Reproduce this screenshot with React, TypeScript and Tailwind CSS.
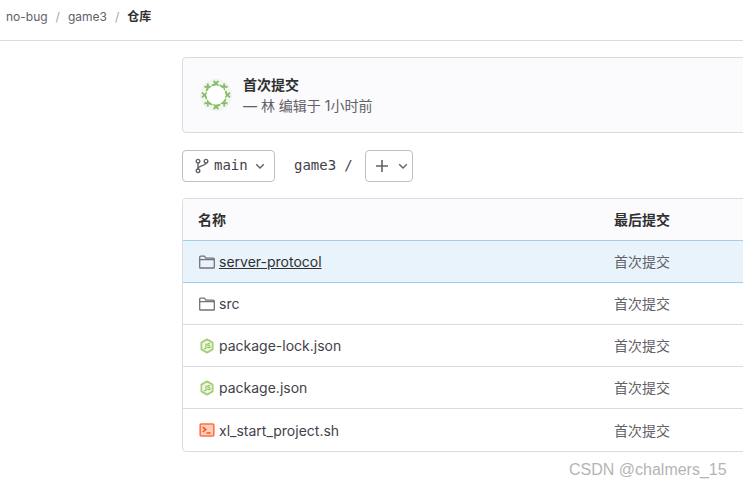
const sans = "font-['Inter','Noto_Sans_CJK_SC',sans-serif]";

const files = [
  { name: 'server-protocol', type: 'folder', active: true },
  { name: 'src', type: 'folder' },
  { name: 'package-lock.json', type: 'node' },
  { name: 'package.json', type: 'node' },
  { name: 'xl_start_project.sh', type: 'shell' },
];

function FolderIcon() {
  return (
    <svg width="16" height="16" viewBox="0 0 16 16" fill="none" stroke="#737278" strokeWidth="1.3">
      <path d="M0.7 13.4V3.2a1 1 0 0 1 1-1h3.6l1.6 2h7.4a1 1 0 0 1 1 1v8.2a.6.6 0 0 1-.6.6H1.3a.6.6 0 0 1-.6-.6z" />
      <path d="M0.7 5.6h14.6" />
    </svg>
  );
}

function NodeIcon() {
  return (
    <svg width="16" height="16" viewBox="0 0 16 16" fill="none">
      <path d="M8 1.4l5.6 3.2v6.8L8 14.6l-5.6-3.2V4.6z" fill="#f1f8e9" stroke="#a5d078" strokeWidth="1.8" strokeLinejoin="round" />
      <path d="M7 5.4v4.6c0 1-1.5 1-1.9.2" stroke="#8bc34a" strokeWidth="1.1" />
      <path d="M11 6.2c-.5-.9-2.4-.9-2.4.3 0 1.3 2.6.7 2.6 2.2 0 1.2-2.2 1.2-2.9.2" stroke="#8bc34a" strokeWidth="1.1" />
    </svg>
  );
}

function ShellIcon() {
  return (
    <svg width="16" height="16" viewBox="0 0 16 16" fill="none">
      <rect x="1.2" y="2" width="13.6" height="12" rx="1" fill="#ffccbc" stroke="#ff7043" strokeWidth="1.6" />
      <path d="M3.8 5.2L6.8 7.6 3.8 10" stroke="#f4511e" strokeWidth="1.5" />
      <path d="M7.6 11h4" stroke="#f4511e" strokeWidth="1.5" />
    </svg>
  );
}

function Avatar() {
  const leaves = Array.from({ length: 8 }, (_, i) => i * 45);
  return (
    <svg width="32" height="32" viewBox="0 0 32 32" className="rounded-full">
      <circle cx="16" cy="16" r="16" fill="#f0f0f0" />
      <circle cx="16" cy="16" r="15" fill="#f3f7f0" />
      {leaves.map((deg) => (
        <g key={deg} transform={`rotate(${deg} 16 16)`}>
          <path d="M13.6 2l4.8 5M18.4 2l-4.8 5" stroke="#86bd68" strokeWidth="1.9" />
          <path d="M19.6 6.6c1.8 .1 2.8 .8 3.6 1.9" stroke="#86bd68" strokeWidth="2" fill="none" />
        </g>
      ))}
      <circle cx="16" cy="16" r="9.6" fill="#ffffff" />
    </svg>
  );
}

function Chevron() {
  return (
    <svg width="10" height="10" viewBox="0 0 10 10" fill="none" stroke="#626168" strokeWidth="1.4">
      <path d="M1.2 3.2L5 7l3.8-3.8" />
    </svg>
  );
}

function BranchIcon() {
  return (
    <svg width="14" height="16" viewBox="0 0 14 16" fill="none" stroke="#626168" strokeWidth="1.4">
      <circle cx="3" cy="3.2" r="1.8" />
      <circle cx="3" cy="12.8" r="1.8" />
      <circle cx="11" cy="3.2" r="1.8" />
      <path d="M3 5v6" />
      <path d="M11 5c0 3-8 2.4-8 6" />
    </svg>
  );
}

export default function App() {
  return (
    <div className={`${sans} relative h-[487px] w-[743px] overflow-hidden bg-white text-[#303030]`}>
      <div className="flex h-[41px] items-center border-b border-[#dcdcde] pl-[6px] pb-[6px] text-[12px] text-[#626168]">
        <span>no-bug</span>
        <span className="mx-[8px] text-[#a4a3a8]">/</span>
        <span>game3</span>
        <span className="mx-[8px] text-[#a4a3a8]">/</span>
        <span className="font-semibold text-[#303030]">仓库</span>
      </div>

      <div className="ml-[182px] w-[640px] pt-[16px]">
        <div className="flex h-[76px] items-center rounded-l-[4px] border border-[#dcdcde] bg-[#fbfafd] pl-[17px]">
          <Avatar />
          <div className="ml-[11px]">
            <div className="text-[14px] leading-[20px] font-semibold">首次提交</div>
            <div className="mt-[1px] text-[14px] leading-[20px] text-[#626168]">— 林 编辑于 1小时前</div>
          </div>
        </div>

        <div className="mt-[17px] flex h-[32px] items-center">
          <div className="flex h-[32px] w-[93px] items-center rounded-[4px] border border-[#bfbfc3] pl-[12px]">
            <BranchIcon />
            <span className="ml-[5px] pb-[2px] font-['DejaVu_Sans_Mono',monospace] text-[14px] text-[#434248]">main</span>
            <span className="ml-[7px]"><Chevron /></span>
          </div>
          <span className="ml-[19px] pb-[2px] font-['DejaVu_Sans_Mono',monospace] text-[14px] text-[#434248]">game3</span>
          <span className="ml-[8px] pb-[2px] font-['DejaVu_Sans_Mono',monospace] text-[14px] text-[#434248]">/</span>
          <div className="ml-[12px] flex h-[32px] w-[48px] items-center rounded-[4px] border border-[#bfbfc3] pl-[9px]">
            <svg width="14" height="14" viewBox="0 0 14 14" stroke="#626168" strokeWidth="1.6">
              <path d="M7 1v12M1 7h12" />
            </svg>
            <span className="ml-[9px]"><Chevron /></span>
          </div>
        </div>

        <div className="mt-[16px] overflow-hidden rounded-[4px] border border-[#dcdcde]">
          <div className="flex h-[41px] items-center bg-[#fbfafd] pl-[15px] text-[14px] font-semibold">
            <div className="w-[416px]">名称</div>
            <div>最后提交</div>
          </div>
          {files.map((file) => (
            <div
              key={file.name}
              className={
                file.active
                  ? 'flex h-[43px] items-center border-y border-[#a3cdec] bg-[#e9f3fc] pl-[16px] text-[14px]'
                  : 'flex h-[42px] items-center border-b border-[#dcdcde] pl-[16px] text-[14px] text-[#434248] last:border-b-0'
              }
            >
              <div className="flex w-[415px] items-center gap-[4px]">
                {file.type === 'folder' && <FolderIcon />}
                {file.type === 'node' && <NodeIcon />}
                {file.type === 'shell' && <ShellIcon />}
                <span className={file.active ? 'underline' : ''}>{file.name}</span>
              </div>
              <div className="text-[14px] text-[#626168]">首次提交</div>
            </div>
          ))}
        </div>
      </div>

      <div className="absolute top-[460px] left-[569px] font-['Liberation_Sans',sans-serif] text-[16px] leading-[20px] text-[#b4b4b4]">
        CSDN @chalmers_15
      </div>
    </div>
  );
}
